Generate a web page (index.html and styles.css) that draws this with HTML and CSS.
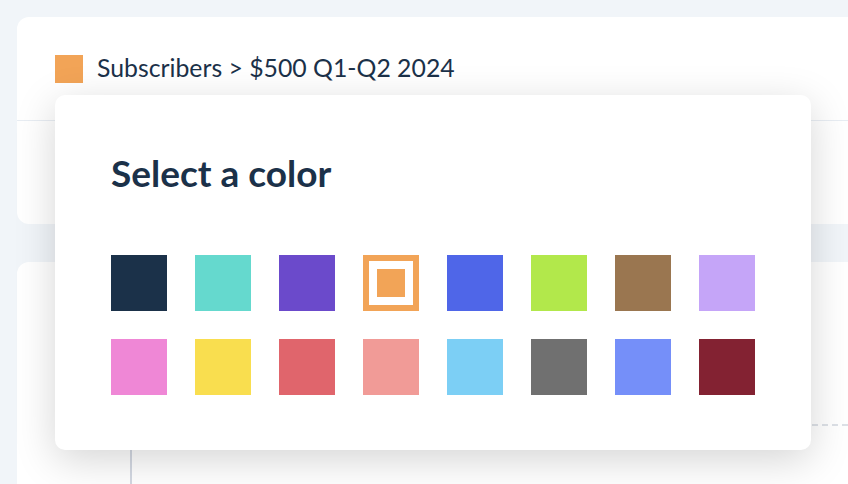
FILE: index.html
```html
<!DOCTYPE html>
<html lang="en">
<head>
    <meta charset="UTF-8">
    <title>Segment color</title>
    <link rel="stylesheet" href="styles.css">
</head>
<body>
    <div class="page">
        <div class="card segment-card">
            <div class="segment-header">
                <span class="segment-dot"></span>
                <span class="segment-name">Subscribers &gt; $500 Q1-Q2 2024</span>
            </div>
        </div>

        <div class="card chart-card">
            <div class="chart">
                <div class="chart-axis"></div>
                <div class="chart-plot">
                    <div class="gridline"></div>
                </div>
            </div>
        </div>

        <div class="color-picker">
            <h2>Select a color</h2>
            <div class="swatches">
                <button class="swatch" style="background: #1b3149"></button>
                <button class="swatch" style="background: #65d9ce"></button>
                <button class="swatch" style="background: #6b4acb"></button>
                <button class="swatch selected"><span class="swatch-inner" style="background: #f2a457"></span></button>
                <button class="swatch" style="background: #4f66e8"></button>
                <button class="swatch" style="background: #b2e84b"></button>
                <button class="swatch" style="background: #9a7650"></button>
                <button class="swatch" style="background: #c5a5f8"></button>
                <button class="swatch" style="background: #ef87d6"></button>
                <button class="swatch" style="background: #f9de4f"></button>
                <button class="swatch" style="background: #e0656c"></button>
                <button class="swatch" style="background: #f19b97"></button>
                <button class="swatch" style="background: #7ccff5"></button>
                <button class="swatch" style="background: #707070"></button>
                <button class="swatch" style="background: #758ff9"></button>
                <button class="swatch" style="background: #832232"></button>
            </div>
        </div>
    </div>
</body>
</html>
```

FILE: styles.css
```css
* {
    margin: 0;
    padding: 0;
    box-sizing: border-box;
}

body {
    font-family: Lato, 'Open Sans', sans-serif;
    background: #f1f5f9;
    color: #1b3149;
    height: 484px;
    overflow: hidden;
}

.page {
    position: relative;
    padding: 17px 0 0 17px;
}

.card {
    background: white;
    border-radius: 12px 0 0 12px;
}

.segment-card {
    height: 207px;
}

.segment-header {
    display: flex;
    align-items: center;
    gap: 14px;
    height: 104px;
    padding: 0 38px;
    border-bottom: 1px solid #e8edf3;
}

.segment-dot {
    width: 28px;
    height: 28px;
    background: #f2a457;
}

.segment-name {
    font-size: 24.8px;
    line-height: 1;
}

.chart-card {
    margin-top: 38px;
    height: 240px;
}

.chart {
    display: flex;
    height: 100%;
    padding-top: 162px;
}

.chart-axis {
    width: 2px;
    margin-left: 113px;
    background: #d3d8e2;
}

.chart-plot {
    flex: 1;
}

.gridline {
    border-top: 2px dashed #dde1e7;
}

.color-picker {
    position: absolute;
    left: 55px;
    top: 95px;
    width: 756px;
    height: 355px;
    background: white;
    border-radius: 10px;
    padding: 58px 56px 56px;
    box-shadow: 0 10px 40px rgba(0,0,0,0.17);
}

.color-picker h2 {
    font-size: 37px;
    font-weight: 700;
    line-height: 40px;
    margin-bottom: 62px;
}

.swatches {
    display: grid;
    grid-template-columns: repeat(8, 56px);
    gap: 28px;
}

.swatch {
    width: 56px;
    height: 56px;
    border: none;
    cursor: pointer;
}

.swatch.selected {
    background: white;
    border: 6px solid #f2a457;
    padding: 8px;
}

.swatch-inner {
    display: block;
    width: 28px;
    height: 28px;
}
```
